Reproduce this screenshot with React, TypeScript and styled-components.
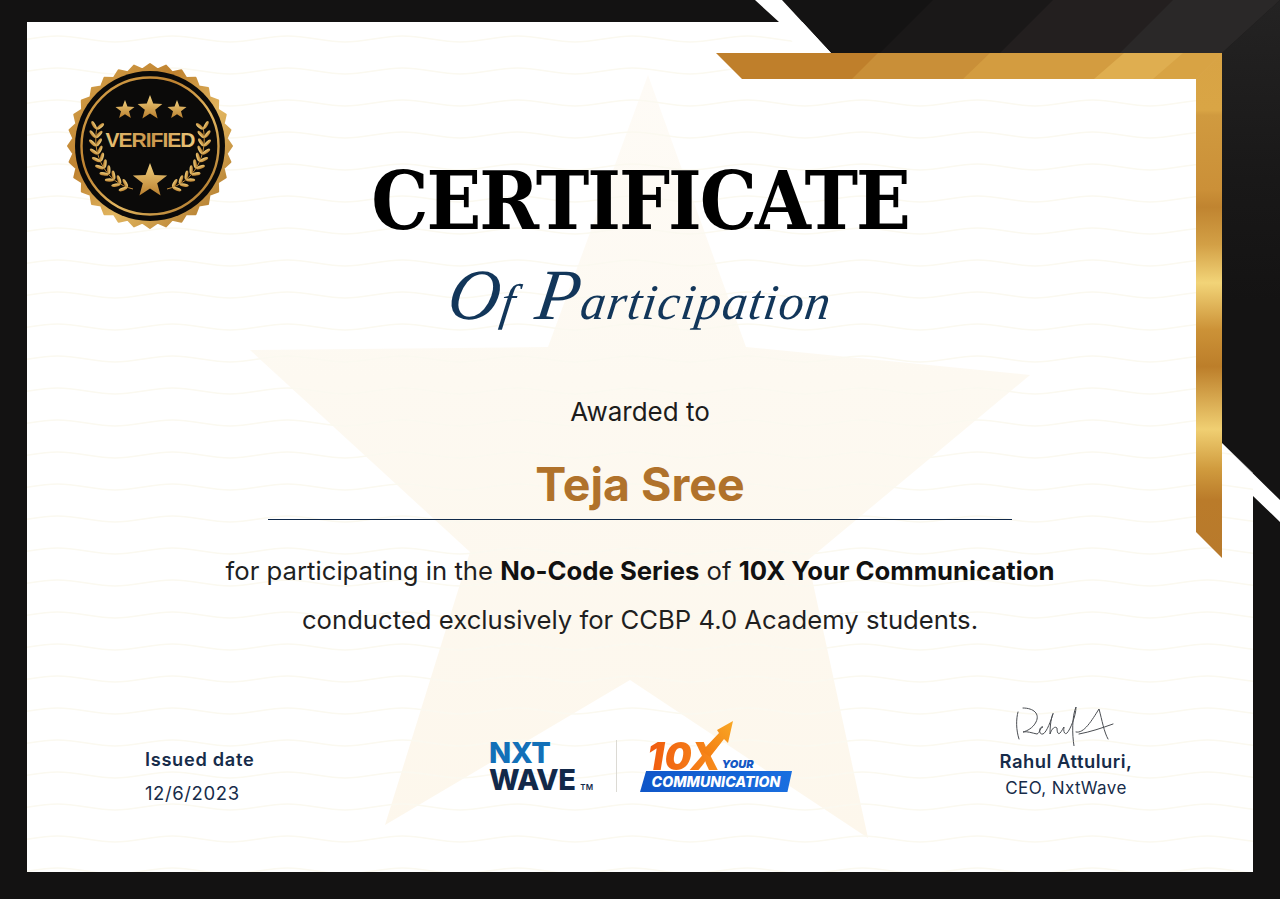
import React from "react";
import styled, { createGlobalStyle } from "styled-components";

const starPoints = (cx: number, cy: number, r: number) =>
  Array.from({ length: 10 }, (_, i) => {
    const radius = i % 2 === 0 ? r : r * 0.42;
    const angle = -Math.PI / 2 + (i * Math.PI) / 5;
    return `${cx + radius * Math.cos(angle)},${cy + radius * Math.sin(angle)}`;
  }).join(" ");

const scallopPoints = Array.from({ length: 64 }, (_, i) => {
  const radius = i % 2 === 0 ? 82 : 77;
  const angle = (i * Math.PI) / 32;
  return `${85 + radius * Math.cos(angle)},${85 + radius * Math.sin(angle)}`;
}).join(" ");

// laurel branch follows a bezier, leaves sit on both sides of it
const laurelAt = (t: number) => {
  const u = 1 - t;
  const x = u * u * u * 32 + 3 * u * u * t * 26 + 3 * u * t * t * 42 + t * t * t * 68;
  const y = u * u * u * 66 + 3 * u * u * t * 95 + 3 * u * t * t * 122 + t * t * t * 128;
  const dx = 3 * u * u * -6 + 6 * u * t * 16 + 3 * t * t * 26;
  const dy = 3 * u * u * 29 + 6 * u * t * 27 + 3 * t * t * 6;
  return { x, y, angle: (Math.atan2(dy, dx) * 180) / Math.PI };
};

const laurelLeaves = Array.from({ length: 10 }, (_, i) => laurelAt(0.02 + i * 0.1));

const Badge = () => (
  <BadgeSvg viewBox="0 0 170 170">
    <defs>
      <linearGradient id="badgeGold" x1="0" y1="0" x2="1" y2="1">
        <stop offset="0" stopColor="#d9a850" />
        <stop offset="0.35" stopColor="#bf8230" />
        <stop offset="0.6" stopColor="#e2b660" />
        <stop offset="1" stopColor="#a56b20" />
      </linearGradient>
      <linearGradient id="starGold" x1="0" y1="0" x2="0" y2="1">
        <stop offset="0" stopColor="#f1d07e" />
        <stop offset="1" stopColor="#b97f2e" />
      </linearGradient>
      <linearGradient id="labelGold" x1="0" y1="0" x2="1" y2="0">
        <stop offset="0" stopColor="#e9c274" />
        <stop offset="0.5" stopColor="#c9944a" />
        <stop offset="1" stopColor="#ecc97c" />
      </linearGradient>
    </defs>
    <polygon points={scallopPoints} fill="url(#badgeGold)" stroke="url(#badgeGold)" strokeWidth="2" strokeLinejoin="round" />
    <circle cx="85" cy="85" r="75" fill="#0b0a09" />
    <circle cx="85" cy="85" r="68.5" fill="none" stroke="url(#badgeGold)" strokeWidth="2.4" />
    <polygon points={starPoints(60, 49, 10)} fill="url(#starGold)" />
    <polygon points={starPoints(85, 47, 13)} fill="url(#starGold)" />
    <polygon points={starPoints(112, 49, 10)} fill="url(#starGold)" />
    <BadgeLabel x="85" y="86" textAnchor="middle" fill="url(#labelGold)">
      VERIFIED
    </BadgeLabel>
    <polygon points={starPoints(85, 120, 18)} fill="url(#starGold)" />
    {[1, -1].map((side) => (
      <g key={side} transform={side === 1 ? undefined : "translate(170 0) scale(-1 1)"}>
        <path d="M32 66 C26 95 42 122 68 128" fill="none" stroke="#c68f3b" strokeWidth="1" />
        {laurelLeaves.map((leaf, i) => (
          <g key={i} transform={`translate(${leaf.x} ${leaf.y}) rotate(${leaf.angle})`}>
            <ellipse cx="-3" cy="-3.2" rx="4.6" ry="1.7" fill="url(#starGold)" transform="rotate(40 -3 -3.2)" />
            <ellipse cx="-3" cy="3.2" rx="4.6" ry="1.7" fill="url(#starGold)" transform="rotate(-40 -3 3.2)" />
          </g>
        ))}
      </g>
    ))}
  </BadgeSvg>
);

const Artwork = () => (
  <ArtSvg viewBox="0 0 1280 899">
    <defs>
      <pattern id="waves" width="115" height="32" patternUnits="userSpaceOnUse">
        <path d="M0 10 C20 10 37 4 57.5 4 C78 4 95 10 115 10" fill="none" stroke="#fbf9f0" strokeWidth="1.4" />
      </pattern>
      <linearGradient id="starFade" x1="0" y1="75" x2="0" y2="838" gradientUnits="userSpaceOnUse">
        <stop offset="0" stopColor="#fefbf6" />
        <stop offset="0.4" stopColor="#fdf9f1" />
        <stop offset="1" stopColor="#fdf7ec" />
      </linearGradient>
      <linearGradient id="darkEdge" x1="0" y1="0" x2="0" y2="300" gradientUnits="userSpaceOnUse">
        <stop offset="0" stopColor="#242323" />
        <stop offset="0.6" stopColor="#191818" />
        <stop offset="1" stopColor="#141313" />
      </linearGradient>
      <linearGradient id="goldSide" x1="0" y1="53" x2="0" y2="558" gradientUnits="userSpaceOnUse">
        <stop offset="0" stopColor="#d8a344" />
        <stop offset="0.113" stopColor="#d9a545" />
        <stop offset="0.123" stopColor="#d09a3f" />
        <stop offset="0.27" stopColor="#cb9038" />
        <stop offset="0.305" stopColor="#c08430" />
        <stop offset="0.38" stopColor="#d3a046" />
        <stop offset="0.455" stopColor="#f2d478" />
        <stop offset="0.548" stopColor="#cc9237" />
        <stop offset="0.621" stopColor="#bc7e2a" />
        <stop offset="0.745" stopColor="#f0cf72" />
        <stop offset="0.824" stopColor="#d09b3e" />
        <stop offset="0.885" stopColor="#ba7b2a" />
        <stop offset="1" stopColor="#b87a2c" />
      </linearGradient>
    </defs>

    <polygon points="648,75 746,347 1030,375 808,560 868,838 630,680 385,825 470,552 250,350 548,347" fill="url(#starFade)" />
    <rect x="27" y="22" width="1226" height="850" fill="url(#waves)" />

    <polygon points="782,0 1280,0 1280,500 1222,443 1222,53 831,53" fill="#141313" />
    <polygon points="880,53 933,0 1280,0 1222,53" fill="#1a1818" />
    <polygon points="1000,53 1053,0 1280,0 1222,53" fill="#231f1f" />
    <polygon points="1120,53 1173,0 1280,0 1222,53" fill="#2a2828" />
    <polygon points="1222,53 1280,0 1280,400 1222,300" fill="url(#darkEdge)" />

    <polygon points="755,0 782,0 831,53 800,53 779,22" fill="#ffffff" />
    <polygon points="1222,443 1280,500 1280,522 1253,496 1253,473" fill="#ffffff" />

    <polygon points="716,53 1222,53 1196,79 742,79" fill="#bf7f2b" />
    <polygon points="878,53 1222,53 1196,79 852,79" fill="#c98f38" />
    <polygon points="990,53 1222,53 1196,79 963,79" fill="#d39c40" />
    <polygon points="1124,53 1222,53 1196,79 1094,79" fill="#dfae50" />
    <polygon points="1183,53 1222,53 1196,79 1153,79" fill="#d8a344" />
    <polygon points="1196,79 1222,53 1222,558 1196,532" fill="url(#goldSide)" />
  </ArtSvg>
);

const App = () => {
  return (
    <Page>
      <GlobalStyle />
      <Sheet>
        <Artwork />
        <Content>
          <Badge />
          <Title>CERTIFICATE</Title>
          <ScriptLine>
            <Swash>O</Swash>f <Swash>P</Swash>articipation
          </ScriptLine>
          <Awarded>Awarded to</Awarded>
          <Recipient>Teja Sree</Recipient>
          <Rule />
          <Sentence>
            for participating in the <strong>No-Code Series</strong> of <strong>10X Your Communication</strong>
          </Sentence>
          <Sentence>conducted exclusively for CCBP 4.0 Academy students.</Sentence>
          <Footer>
            <IssuedBlock>
              <IssuedLabel>Issued date</IssuedLabel>
              <IssuedValue>12/6/2023</IssuedValue>
            </IssuedBlock>
            <Logos>
              <NxtWave>
                <Nxt>NXT</Nxt>
                <Wave>
                  WAVE<Tm>TM</Tm>
                </Wave>
              </NxtWave>
              <LogoDivider />
              <TenX>
                <TenXTop>
                  <TenXMark>10X</TenXMark>
                  <TenXYour>YOUR</TenXYour>
                  <TenXArrow viewBox="0 0 35 38">
                    <defs>
                      <linearGradient id="arrowFill" x1="0" y1="1" x2="1" y2="0">
                        <stop offset="0" stopColor="#f37a12" />
                        <stop offset="1" stopColor="#f9a825" />
                      </linearGradient>
                    </defs>
                    <path d="M33 2 L28 24 L24 20 L10 38 L2 32 L19 14 L17 11 Z" fill="url(#arrowFill)" />
                  </TenXArrow>
                </TenXTop>
                <Banner>
                  <BannerText>COMMUNICATION</BannerText>
                </Banner>
              </TenX>
            </Logos>
            <SignBlock>
              <Signature viewBox="0 0 100 40">
                <path
                  d="M2 6 C0 13 0 24 3 33 M7 2 C18 2 24 8 20 16 C17 22 11 25 7 26 C11 25 16 27 21 28 C24 27 24 21 27 21 C23 20 22 29 27 28 C31 26 35 14 37 8 C38 5 34 12 34 28 C36 22 39 20 41 22 C41 26 42 29 44 27 C46 25 47 22 48 21 C47 26 49 29 51 27 C54 24 60 10 60 1 C56 10 56 28 58 40 M60 26 C68 28 76 14 83 3 C86 14 88 26 92 33 M63 28 C74 26 86 22 97 18"
                  fill="none"
                  stroke="#4a4d52"
                  strokeWidth="1"
                  strokeLinecap="round"
                />
              </Signature>
              <SignName>Rahul Attuluri,</SignName>
              <SignRole>CEO, NxtWave</SignRole>
            </SignBlock>
          </Footer>
        </Content>
      </Sheet>
    </Page>
  );
};

export default App;

const GlobalStyle = createGlobalStyle`
  html, body {
    margin: 0;
    padding: 0;
    background: #131212;
  }
`;

const Page = styled.div`
  position: relative;
  box-sizing: border-box;
  width: 1280px;
  height: 899px;
  padding: 22px 27px 27px;
  overflow: hidden;
  background: #131212;
  font-family: Inter, "Liberation Sans", sans-serif;
`;

const Sheet = styled.div`
  width: 1226px;
  height: 850px;
  background: #ffffff;
`;

const ArtSvg = styled.svg`
  position: absolute;
  top: 0;
  left: 0;
  width: 1280px;
  height: 899px;
`;

const Content = styled.main`
  position: relative;
  z-index: 1;
  box-sizing: border-box;
  display: flex;
  flex-direction: column;
  align-items: center;
  height: 850px;
  padding-top: 129px;
  padding-bottom: 68px;
`;

const BadgeSvg = styled.svg`
  position: absolute;
  top: 39px;
  left: 38px;
  width: 170px;
  height: 170px;
`;

const BadgeLabel = styled.text`
  font-family: "Liberation Sans", Arial, sans-serif;
  font-size: 21px;
  font-weight: 700;
  letter-spacing: -1px;
`;

const Title = styled.h1`
  margin: 0;
  font-family: "DejaVu Serif Condensed", "DejaVu Serif", serif;
  font-stretch: condensed;
  font-size: 80px;
  font-weight: 700;
  line-height: 100px;
  letter-spacing: -2px;
  color: #000000;
`;

const ScriptLine = styled.div`
  margin-top: 11px;
  font-family: "Liberation Serif", serif;
  font-style: italic;
  font-size: 50px;
  line-height: 80px;
  letter-spacing: 1.2px;
  word-spacing: 6px;
  color: #12365a;
  transform: skewX(-8deg);
`;

const Swash = styled.span`
  font-size: 72px;
  line-height: 0;
`;

const Awarded = styled.div`
  margin-top: 55px;
  font-size: 26px;
  line-height: 30px;
  color: #1c1c1c;
`;

const Recipient = styled.div`
  margin-top: 29px;
  font-size: 46.5px;
  font-weight: 700;
  line-height: 56px;
  color: #b0722b;
`;

const Rule = styled.div`
  width: 744px;
  height: 1px;
  margin-top: 7px;
  margin-bottom: 26px;
  background: #10294a;
`;

const Sentence = styled.p`
  margin: 0;
  font-size: 25.7px;
  line-height: 49px;
  color: #1f1f1f;

  strong {
    font-weight: 700;
    color: #111111;
  }
`;

const Footer = styled.footer`
  display: grid;
  grid-template-columns: 344px 477px 200px;
  align-items: end;
  box-sizing: border-box;
  width: 100%;
  margin-top: auto;
  padding-left: 118px;
`;

const IssuedBlock = styled.div`
  display: flex;
  flex-direction: column;
  gap: 12px;
  color: #172c4a;
`;

const IssuedLabel = styled.div`
  font-size: 18.2px;
  font-weight: 600;
  line-height: 22px;
  letter-spacing: 0.7px;
`;

const IssuedValue = styled.div`
  font-size: 18.5px;
  line-height: 22px;
  letter-spacing: 0.6px;
`;

const Logos = styled.div`
  display: flex;
  align-items: flex-end;
  gap: 24px;
  margin-bottom: 12px;
`;

const NxtWave = styled.div`
  display: flex;
  flex-direction: column;
  gap: 2px;
  width: 103px;
  font-size: 29px;
  font-weight: 800;
  line-height: 25px;
  letter-spacing: -0.5px;
`;

const Nxt = styled.div`
  color: #1270b8;
`;

const Wave = styled.div`
  color: #12294a;
  white-space: nowrap;
`;

const Tm = styled.span`
  margin-left: 5px;
  font-size: 8px;
  font-weight: 600;
  line-height: 0;
  letter-spacing: 0;
`;

const LogoDivider = styled.div`
  width: 1px;
  height: 52px;
  background: #dcdad4;
`;

const TenX = styled.div`
  display: flex;
  flex-direction: column;
  align-items: flex-start;
  width: 152px;
  margin-left: -1px;
`;

const TenXTop = styled.div`
  position: relative;
  display: flex;
  align-items: flex-end;
  height: 30px;
  padding-left: 7px;
`;

const TenXMark = styled.span`
  display: block;
  font-size: 38px;
  font-weight: 900;
  font-style: italic;
  line-height: 30px;
  letter-spacing: 0.4px;
  background: linear-gradient(90deg, #f0590e, #f78f1c);
  -webkit-background-clip: text;
  background-clip: text;
  color: transparent;
`;

const TenXYour = styled.span`
  margin-left: 1px;
  font-size: 11px;
  font-weight: 900;
  font-style: italic;
  line-height: 13px;
  color: #1457c4;
`;

const TenXArrow = styled.svg`
  position: absolute;
  top: -22px;
  left: 60px;
  width: 35px;
  height: 38px;
`;

const Banner = styled.div`
  display: flex;
  align-items: center;
  justify-content: center;
  width: 152px;
  height: 21px;
  background: linear-gradient(90deg, #0f56c8, #1a6fe0);
  clip-path: polygon(4% 0, 100% 0, 97% 100%, 0 100%);
`;

const BannerText = styled.span`
  font-size: 14.2px;
  font-weight: 800;
  font-style: italic;
  line-height: 21px;
  color: #ffffff;
`;

const SignBlock = styled.div`
  display: flex;
  flex-direction: column;
  align-items: center;
  margin-bottom: 2px;
  color: #172c4a;
`;

const Signature = styled.svg`
  width: 100px;
  height: 40px;
  margin-bottom: 2px;
`;

const SignName = styled.div`
  font-size: 18.4px;
  font-weight: 600;
  line-height: 26px;
  letter-spacing: 0.5px;
`;

const SignRole = styled.div`
  font-size: 17px;
  line-height: 28px;
  letter-spacing: 0.4px;
`;
